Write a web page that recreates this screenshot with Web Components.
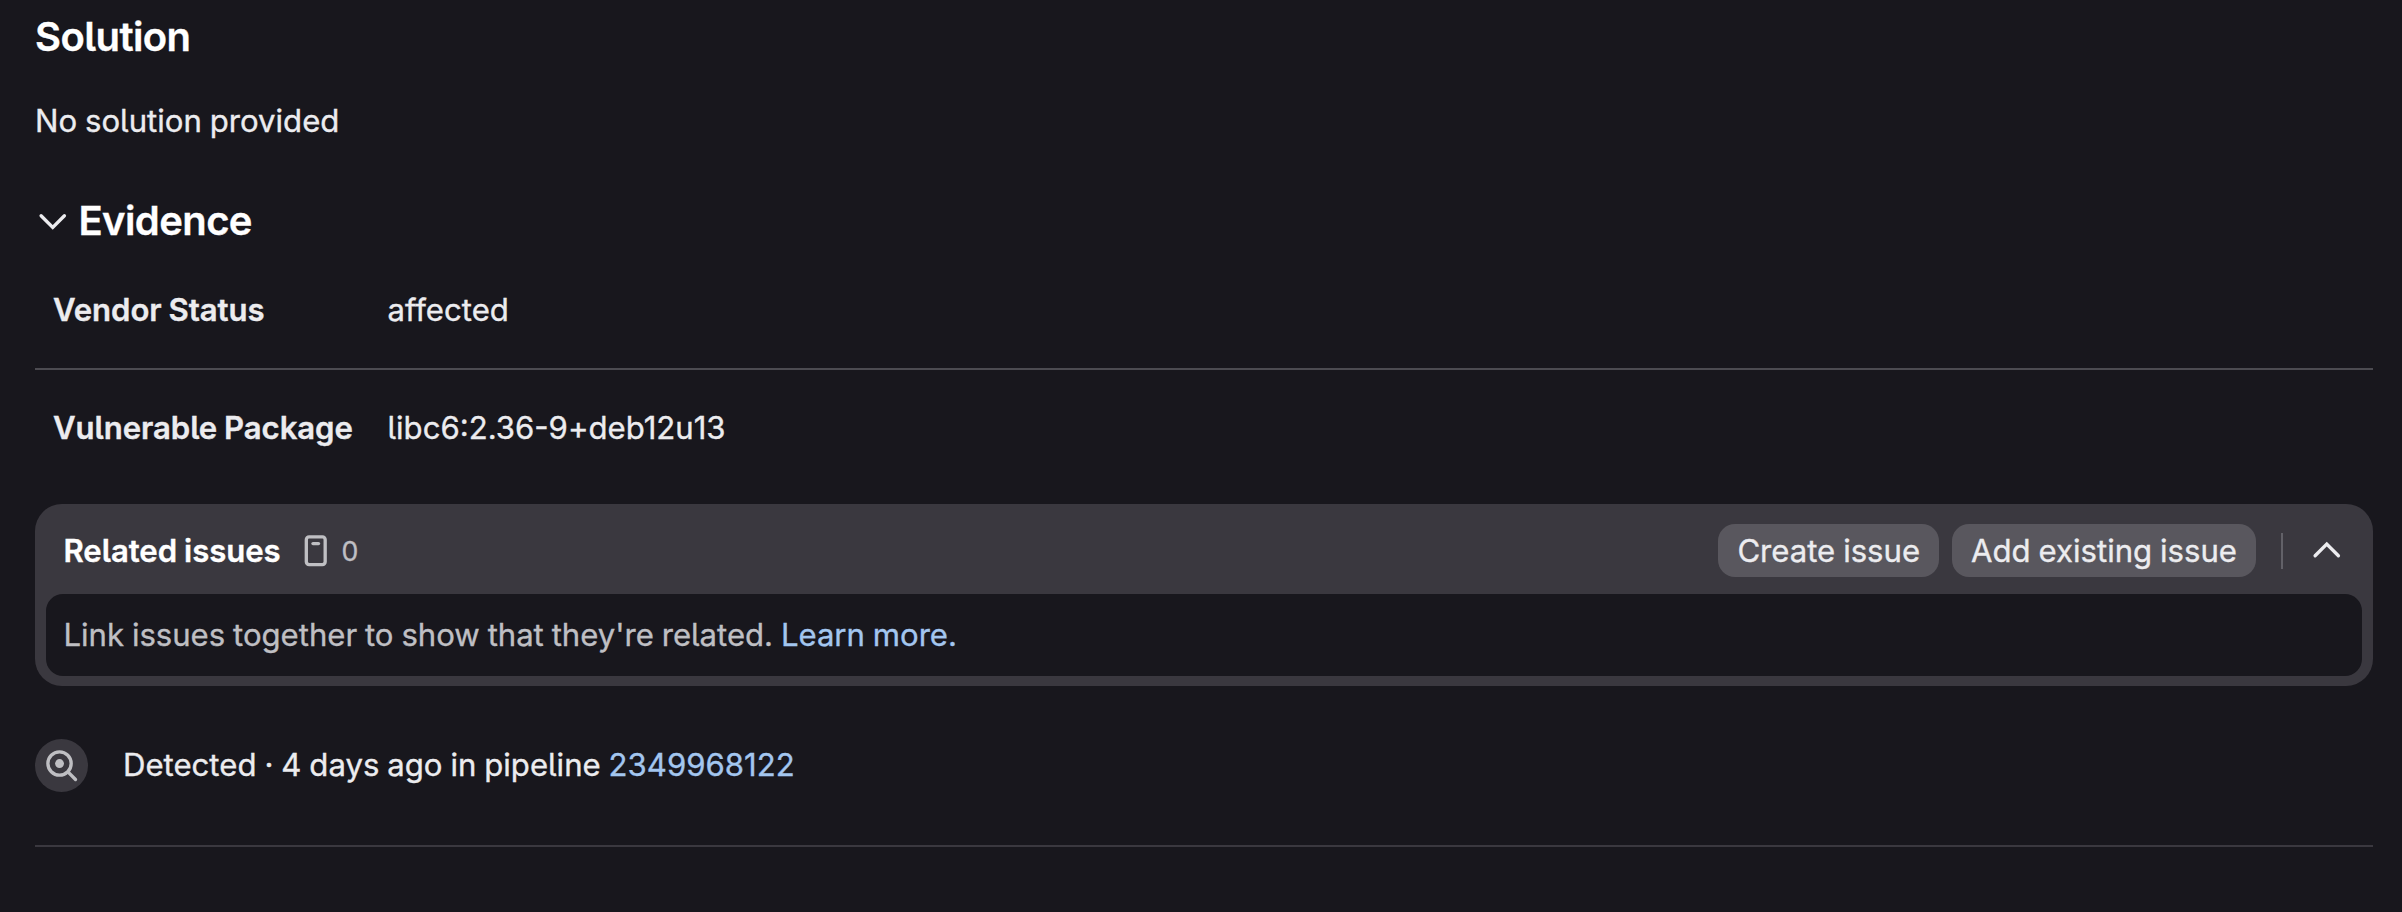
<!DOCTYPE html>
<html lang="en">
<head>
<meta charset="utf-8">
<title>Vulnerability details</title>
<style>
    body {
        margin: 0;
        height: 912px;
        overflow: hidden;
        background: #18171d;
        color: #ececef;
        font: 400 31.11px/48px Inter, "Noto Sans", sans-serif;
        font-feature-settings: "cv05";
        word-spacing: -0.8px;
        -webkit-text-stroke: 0.35px currentColor;
    }
</style>
</head>
<body>
<vulnerability-details></vulnerability-details>

<script>
const icons = {
    chevron: '<path d="M2.75 5.75 8 11l5.25-5.25"/>',
    issues: '<rect x="3.75" y="1.75" width="8.5" height="12.5" rx="1.25"/><path d="M6.75 4.75h2.5"/>',
    detected: '<circle cx="7" cy="7" r="5.25"/><circle cx="7" cy="7" r="2" fill="currentColor" stroke="none"/><path d="m10.9 10.9 3.3 3.3"/>'
};

class UiIcon extends HTMLElement {
    connectedCallback() {
        this.attachShadow({ mode: 'open' });
        this.shadowRoot.innerHTML = `
            <style>
                :host { display: block; width: 35.5px; height: 35.5px; flex: none; }
                :host([flip]) { transform: scaleY(-1); }
                svg { display: block; width: 100%; height: 100%; }
            </style>
            <svg viewBox="0 0 16 16" fill="none" stroke="currentColor" stroke-width="1.5" stroke-linecap="round">
                ${icons[this.getAttribute('name')]}
            </svg>
        `;
    }
}

class UiButton extends HTMLElement {
    connectedCallback() {
        this.attachShadow({ mode: 'open' });
        this.shadowRoot.innerHTML = `
            <style>
                :host { display: block; }
                button {
                    display: block;
                    box-sizing: border-box;
                    height: 53px;
                    padding: 0 19px;
                    border: 0;
                    border-radius: 17px;
                    background: #59575e;
                    color: #ececef;
                    font: inherit;
                    font-feature-settings: inherit;
                    word-spacing: inherit;
                    white-space: nowrap;
                }
            </style>
            <button type="button"><slot></slot></button>
        `;
    }
}

class SectionHeading extends HTMLElement {
    connectedCallback() {
        this.attachShadow({ mode: 'open' });
        this.shadowRoot.innerHTML = `
            <style>
                :host { display: flex; align-items: center; gap: 8px; height: 48px; }
                h3 { margin: 0; color: #fff; font-size: 40px; font-weight: 600; line-height: 48px; letter-spacing: -0.6px; }
            </style>
            <slot name="icon"></slot>
            <h3><slot></slot></h3>
        `;
    }
}

class EvidenceRow extends HTMLElement {
    connectedCallback() {
        this.attachShadow({ mode: 'open' });
        this.shadowRoot.innerHTML = `
            <style>
                :host { display: grid; grid-template-columns: 334.5px 1fr; padding: 0 18px; }
                .label { font-weight: 600; letter-spacing: -0.07px; }
            </style>
            <div class="label">${this.getAttribute('label')}</div>
            <div><slot></slot></div>
        `;
    }
}

class RelatedIssues extends HTMLElement {
    connectedCallback() {
        this.attachShadow({ mode: 'open' });
        this.shadowRoot.innerHTML = `
            <style>
                :host {
                    display: block;
                    box-sizing: border-box;
                    height: 182px;
                    padding: 0 11px 10px;
                    border-radius: 27px;
                    background: #3a383f;
                }
                header {
                    display: flex;
                    align-items: center;
                    box-sizing: border-box;
                    height: 90px;
                    padding: 3px 18px 0 17.5px;
                }
                h2 { margin: 0; color: #fff; font-size: inherit; font-weight: 600; letter-spacing: -0.05px; }
                .issues { margin-left: 17px; color: #bfbfc3; }
                .count { margin-left: 8.5px; color: #bfbfc3; font-size: 26.67px; }
                .actions { display: flex; gap: 13px; margin-left: auto; }
                .toggle {
                    display: flex;
                    align-items: center;
                    height: 36px;
                    margin-left: 25px;
                    padding-left: 25.5px;
                    border-left: 2px solid #626168;
                }
                .body {
                    box-sizing: border-box;
                    height: 82px;
                    padding: 17px 17.5px;
                    border-radius: 17px;
                    background: #18171d;
                    color: #bfbfc3;
                    letter-spacing: -0.02px;
                }
            </style>
            <header>
                <h2>Related issues</h2>
                <ui-icon class="issues" name="issues"></ui-icon>
                <span class="count">0</span>
                <div class="actions"><slot name="actions"></slot></div>
                <div class="toggle"><ui-icon name="chevron" flip></ui-icon></div>
            </header>
            <div class="body"><slot></slot></div>
        `;
    }
}

class DetectedNote extends HTMLElement {
    connectedCallback() {
        this.attachShadow({ mode: 'open' });
        this.shadowRoot.innerHTML = `
            <style>
                :host { display: flex; align-items: center; gap: 35px; height: 53px; }
                .badge {
                    display: grid;
                    place-items: center;
                    width: 53px;
                    height: 53px;
                    border-radius: 50%;
                    background: #3a383f;
                    color: #bfbfc3;
                }
                .text { padding-bottom: 2px; }
            </style>
            <div class="badge"><ui-icon name="detected"></ui-icon></div>
            <div class="text"><slot></slot></div>
        `;
    }
}

class VulnerabilityDetails extends HTMLElement {
    connectedCallback() {
        this.attachShadow({ mode: 'open' });
        this.shadowRoot.innerHTML = `
            <style>
                :host { display: block; padding: 13px 29px 0 35px; }
                p { margin: 36px 0 52px; }
                a { color: #a3c6ef; text-decoration: none; }
                evidence-row:first-of-type { margin-top: 41px; padding-bottom: 34px; border-bottom: 2px solid #4c4b51; }
                evidence-row:last-of-type { padding-top: 34px; }
                related-issues { margin-top: 52px; }
                detected-note { margin-top: 53px; padding-bottom: 53px; border-bottom: 2px solid #3a383f; }
            </style>
            <section-heading>Solution</section-heading>
            <p>No solution provided</p>
            <section-heading><ui-icon slot="icon" name="chevron"></ui-icon>Evidence</section-heading>
            <evidence-row label="Vendor Status">affected</evidence-row>
            <evidence-row label="Vulnerable Package">libc6:2.36-9+deb12u13</evidence-row>
            <related-issues>
                <ui-button slot="actions">Create issue</ui-button>
                <ui-button slot="actions">Add existing issue</ui-button>
                <span>Link issues together to show that they're related. <a>Learn more.</a></span>
            </related-issues>
            <detected-note><span>Detected · 4 days ago in pipeline <a>2349968122</a></span></detected-note>
        `;
    }
}

customElements.define('ui-icon', UiIcon);
customElements.define('ui-button', UiButton);
customElements.define('section-heading', SectionHeading);
customElements.define('evidence-row', EvidenceRow);
customElements.define('related-issues', RelatedIssues);
customElements.define('detected-note', DetectedNote);
customElements.define('vulnerability-details', VulnerabilityDetails);
</script>
</body>
</html>
